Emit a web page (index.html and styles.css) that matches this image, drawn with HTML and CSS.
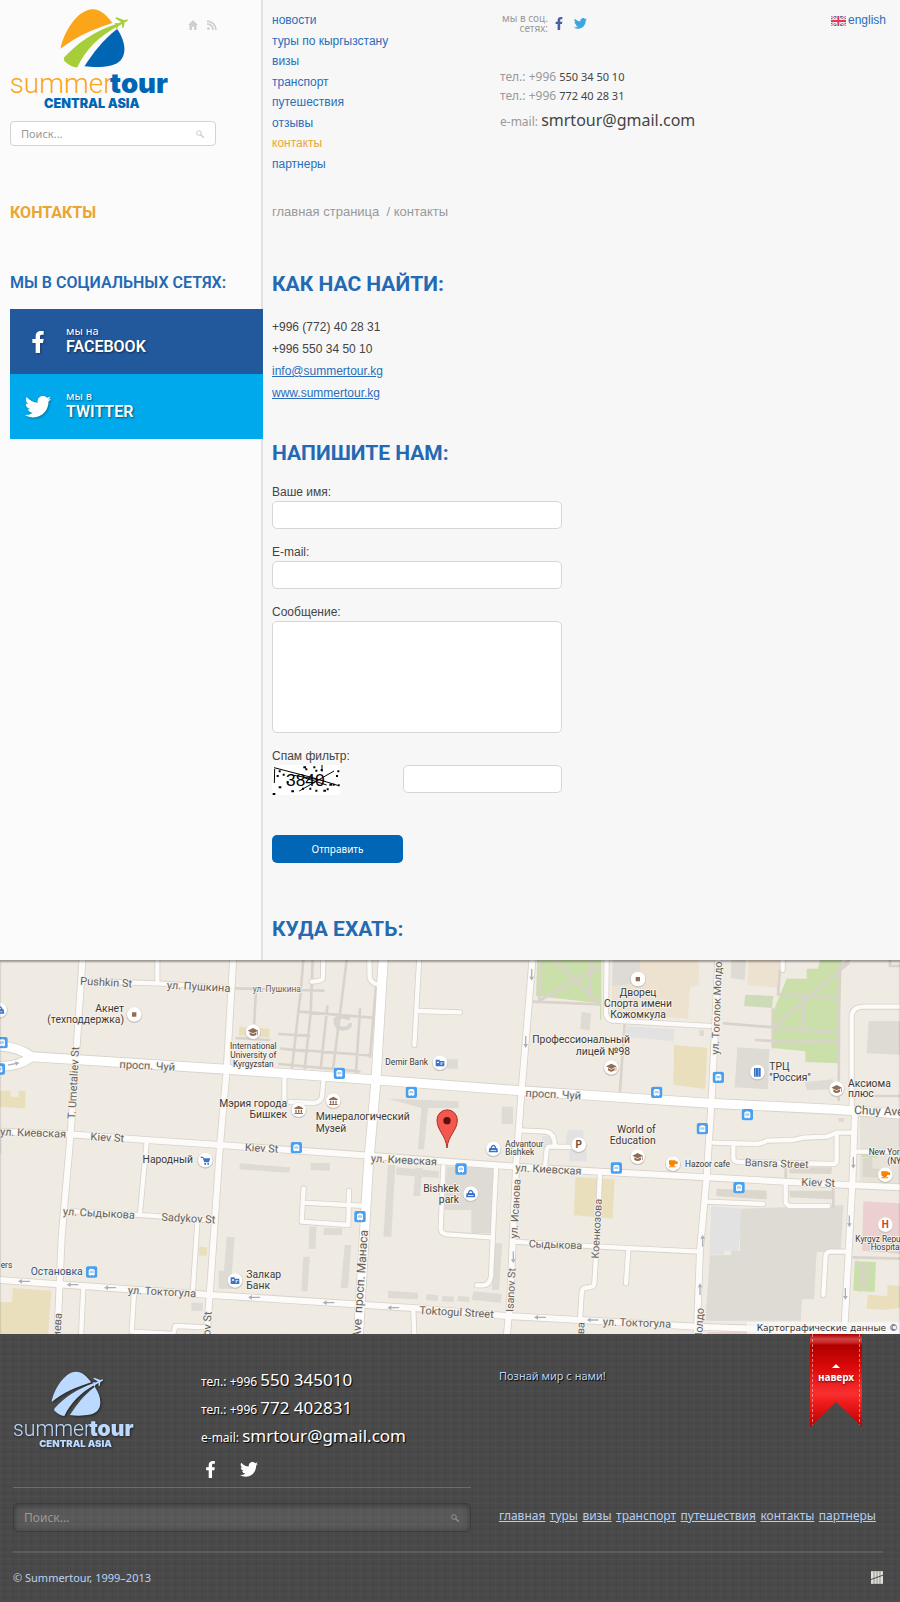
FILE: index.html
```html
<!DOCTYPE html>
<html lang="ru">
<head>
<meta charset="utf-8">
<title>Summertour — контакты</title>
<link rel="stylesheet" href="styles.css">
</head>
<body>
<svg class="defs" width="0" height="0" aria-hidden="true">
  <defs>
    <symbol id="ic-fb" viewBox="0 0 34 66"><path d="M10 66V36H0V24h10v-8C10 5 17 0 26 0h8v11h-6c-4 0-5 2-5 6v7h11l-2 12h-9v30z"/></symbol>
    <symbol id="ic-tw" viewBox="0 0 24 20"><path d="M24 2.4a9.700 9.700 0 0 1-2.800.8A4.900 4.900 0 0 0 23.300.4a9.800 9.800 0 0 1-3.100 1.200 4.900 4.900 0 0 0-8.400 4.500A14 14 0 0 1 1.700 1 4.900 4.900 0 0 0 3.200 7.500 4.900 4.900 0 0 1 1 6.900a4.900 4.900 0 0 0 3.900 4.900 4.900 4.900 0 0 1-2.200.1 4.900 4.900 0 0 0 4.600 3.400A9.900 9.900 0 0 1 0 17.300a13.900 13.900 0 0 0 7.500 2.200c9.100 0 14.300-7.700 14-14.600A10 10 0 0 0 24 2.400z"/></symbol>
    <symbol id="ic-search" viewBox="0 0 24 24"><circle cx="9" cy="9" r="7" fill="none" stroke="currentColor" stroke-width="3"/><path d="M14 14l8 8" stroke="currentColor" stroke-width="4" stroke-linecap="round"/></symbol>
    <symbol id="logo" viewBox="28 24 484 308">
      <path class="lg-a" d="M180 146C188 98 230 28 276 27c28 0 44 22 60 41-62 20-112 42-156 78z"/>
      <path class="lg-b" d="M190 173C234 124 286 92 345 72l-3-3 5-1 7 1 8-4-18-11 4-3 24 9 8-3c3 1 3 3 0 6l-8 4-2 15-5 1 0-12-12 7-4 9-3-6c-50 28-90 66-116 121-14-1-30-10-40-22z"/>
      <path class="lg-c" d="M252 198C278 158 306 120 350 86c14 20 22 42 22 62-1 28-16 42-40 48-28 6-58 5-80 2z"/>
      <text class="lg-sum" x="27" y="280">summer</text>
      <text class="lg-tour" x="329" y="279">tour</text>
      <text class="lg-ca" x="274" y="325" text-anchor="middle">CENTRAL ASIA</text>
    </symbol>
    <symbol id="bus" viewBox="0 0 36 36"><rect x="1" y="1" width="34" height="34" rx="6" fill="#4aa0ee"/><path d="M9 27V14c0-4 3-6 9-6s9 2 9 6v13h-3v2h-3v-2h-6v2h-3v-2z" fill="#fff"/><path d="M12 14h12v7H12z" fill="#a8d0f6"/></symbol>
    <symbol id="pin" viewBox="0 0 52 52"><circle cx="26" cy="27" r="24" fill="#c9c5be"/><circle cx="26" cy="25" r="22" fill="#fff"/></symbol>
    <symbol id="cap" viewBox="0 0 52 52"><use href="#pin"/><path d="M10 22l16-8 16 8-16 8zM16 27l10 5 10-5v7q-10 8-20 0zM39 24h2v12h-2z" fill="#936b52"/></symbol>
    <symbol id="cup" viewBox="0 0 52 52"><use href="#pin"/><path d="M14 15h19v3h7v8h-8l-3 6h-9l-6-5zM14 33h20v3H14z" fill="#fb8200"/></symbol>
    <symbol id="dot" viewBox="0 0 52 52"><use href="#pin"/><path d="M19 19h13v13H19z" fill="#936b52"/></symbol>
    <symbol id="bank" viewBox="0 0 52 52"><use href="#pin"/><path d="M13 16h12v4h14v16H13z" fill="#3b74c8"/><path d="M17 22h6v4h-6zM28 24h3v8h-3zM33 24h3v3h-3z" fill="#fff"/></symbol>
    <symbol id="museum" viewBox="0 0 52 52"><use href="#pin"/><path d="M13 20l13-7 13 7v3H13zM16 25h4v9h-4zM24 25h4v9h-4zM32 25h4v9h-4zM13 35h26v3H13z" fill="#936b52"/></symbol>
    <symbol id="bag" viewBox="0 0 52 52"><use href="#pin"/><path d="M14 23h24l2 13H12z" fill="#3b74c8"/><path d="M20 24v-4q6-9 12 0v4" fill="none" stroke="#3b74c8" stroke-width="4"/><path d="M18 29h16v3H18z" fill="#cfe0f5"/></symbol>
    <symbol id="arrow" viewBox="0 0 36 16"><path d="M0 8L12 1v5h24v4H12v5z" fill="#a9b0ba"/></symbol>
  </defs>
</svg>

<div class="top">
  <aside class="side">
    <div class="brand">
      <a href="#" class="logo" aria-label="Summertour"><svg class="logo-img"><use href="#logo"/></svg></a>
      <div class="quick">
        <a href="#" aria-label="Домой"><svg viewBox="0 0 28 28"><path d="M14 0l14 14h-4v14h-7v-9h-6v9H4V14H0z"/></svg></a>
        <a href="#" aria-label="RSS"><svg viewBox="0 0 28 28"><circle cx="4" cy="24" r="4"/><path d="M0 11a17 17 0 0 1 17 17M0 3a25 25 0 0 1 25 25" fill="none" stroke="#cfcfcf" stroke-width="5"/></svg></a>
      </div>
    </div>
    <form class="search">
      <input type="text" placeholder="Поиск..." aria-label="Поиск">
      <button type="button" aria-label="Искать"><svg><use href="#ic-search"/></svg></button>
    </form>
    <h1 class="page-title">КОНТАКТЫ</h1>
    <h3 class="soc-title">МЫ В СОЦИАЛЬНЫХ СЕТЯХ:</h3>
    <a href="#" class="soc soc-fb"><svg><use href="#ic-fb"/></svg><span><small>мы на</small><b>FACEBOOK</b></span></a>
    <a href="#" class="soc soc-tw"><svg><use href="#ic-tw"/></svg><span><small>мы в</small><b>TWITTER</b></span></a>
  </aside>

  <main class="main">
    <header class="head">
      <nav class="nav">
        <a href="#">новости</a>
        <a href="#">туры по кыргызстану</a>
        <a href="#">визы</a>
        <a href="#">транспорт</a>
        <a href="#">путешествия</a>
        <a href="#">отзывы</a>
        <a href="#" class="active">контакты</a>
        <a href="#">партнеры</a>
      </nav>
      <div class="info">
        <div class="nets"><span>мы в соц. сетях:</span><a href="#" class="nf" aria-label="Facebook"><svg><use href="#ic-fb"/></svg></a><a href="#" class="nt" aria-label="Twitter"><svg><use href="#ic-tw"/></svg></a></div>
        <p>тел.: +996 <b>550 34 50 10</b></p>
        <p>тел.: +996 <b>772 40 28 31</b></p>
        <p class="mail">e-mail: <strong>smrtour@gmail.com</strong></p>
      </div>
      <a href="#" class="lang"><svg viewBox="0 0 45 30"><path d="M0 0h45v30H0z" fill="#5a6fb0"/><path d="M0 0l45 30M45 0L0 30" stroke="#fff" stroke-width="7"/><path d="M0 0l45 30M45 0L0 30" stroke="#e0566a" stroke-width="3"/><path d="M22 0v30M0 15h45" stroke="#fff" stroke-width="11"/><path d="M22 0v30M0 15h45" stroke="#e23a4e" stroke-width="6"/></svg>english</a>
    </header>
    <div class="crumbs"><a href="#">главная страница</a>&nbsp; / контакты</div>

    <h2>КАК НАС НАЙТИ:</h2>
    <div class="find">
      <p>+996 (772) 40 28 31</p>
      <p>+996 550 34 50 10</p>
      <p><a href="#">info@summertour.kg</a></p>
      <p><a href="#">www.summertour.kg</a></p>
    </div>

    <h2>НАПИШИТЕ НАМ:</h2>
    <form class="form">
      <label for="f-name">Ваше имя:</label>
      <input id="f-name" type="text">
      <label for="f-mail">E-mail:</label>
      <input id="f-mail" type="text">
      <label for="f-msg">Сообщение:</label>
      <textarea id="f-msg"></textarea>
      <label for="f-spam">Спам фильтр:</label>
      <div class="spam">
        <svg class="captcha" viewBox="0 0 204 90" role="img" aria-label="3840">
          <path d="M0 0h204v90H0z" fill="#fff"/>
          <text x="42" y="62" class="cap-text">3840</text>
          <g fill="none" stroke="#000" stroke-width="3"><path d="M6 8l116 30 78 24M82 78l104-60M8 12l-1 42M60 30l90 16M96 38l68 22M150 0v20"/></g>
          <path d="M20 16h6v6h-6zM14 30h6v6h-6zM32 26h6v6h-6zM20 64h8v6h-8zM58 76h8v6h-8zM94 4h8v6h-8zM100 10h6v6h-6zM124 4h6v6h-6zM130 14h6v6h-6zM146 12h6v6h-6zM90 68h6v6h-6zM112 68h6v6h-6zM130 74h6v6h-6zM154 74h8v6h-8zM164 70h6v6h-6zM172 56h8v6h-8zM182 56h6v6h-6zM192 30h6v6h-6zM196 16h6v6h-6zM198 58h5v6h-5zM2 84h8v6H2zM44 48h6v6h-6z"/>
        </svg>
        <input id="f-spam" type="text">
      </div>
      <button type="button" class="send">Отправить</button>
    </form>
    <h2 class="last">КУДА ЕХАТЬ:</h2>
  </main>
</div>

<section class="map" aria-label="Карта">
<svg class="map-svg" viewBox="0 30 2700 1122" preserveAspectRatio="xMidYMid slice">
  <defs>
    <g id="r1">
      <path d="M472 20V95M240 93L472 100 690 115M440 575L420 790M190 782L450 797 640 812M592 820L578 1030M250 1010L243 1160M402 1030L395 1145 520 1152 526 1128 620 1132"/>
      <path d="M1258 20L1243 285M1258 183L1380 187M970 20L969 84Q968 94 935 95M1108 20L1109 84Q1116 105 1150 105M853 385V450M970 395L966 440Q960 458 940 459L870 456"/>
      <path d="M1330 650L1322 835Q1322 851 1340 853L1470 862M1488 655L1473 980Q1468 1006 1450 1006L1430 1006M911 715L905 815 1045 825 1047 722M910 758L1100 768"/>
      <path d="M1560 541L1640 545Q1666 552 1664 590M1635 650L1640 600Q1642 590 1650 590L1730 591M1540 875L1800 890 2100 905M1800 670L1790 890 1783 1000Q1782 1012 1765 1012L1753 1014Q1746 1016 1745 1030L1740 1110M1885 900L1878 1000M1240 1080L1243 1160"/>
      <path d="M1820 20L1818 190Q1820 210 1840 212L2130 228M2140 578L2270 582Q2290 580 2300 572L2380 570 2410 563 2480 560 2510 548H2560M2200 582V625Q2202 636 2220 636L2500 642Q2510 642 2510 630V555M2120 755L2290 762M2357 700V755Q2360 768 2375 768H2485M2470 1035L2477 915Q2480 905 2492 905H2540M2570 605H2700M2348 20V60M2555 470V195Q2560 170 2590 170H2700"/>
    </g>
    <g id="r2">
      <path d="M248 20L230 290 212 550 185 860 172 1160M700 20L680 360 660 585 635 950 620 1160M1598 20L1565 420 1548 650 1530 1060 1520 1160M2155 20L2135 450 2120 680 2100 900 2090 1160M2565 480L2557 700 2532 1160"/>
      <path d="M0 545L210 553 440 570 660 585 900 602 1110 617 1340 635 1550 650 1800 665 2120 682 2500 703 2700 712M0 990L175 1003 620 1034 900 1052 1250 1075 1520 1098 1740 1110 2090 1130 2260 1136 2700 1150"/>
    </g>
    <g id="r3">
      <path d="M95 320L680 358 1130 390 1560 422 1800 438 2130 460 2500 478 2700 492M1150 20L1128 390 1105 650 1075 1160"/>
      <path d="M-10 288Q50 288 95 320M-10 350Q60 350 95 320"/>
    </g>
  </defs>
  <path d="M0 0h2700v1160H0z" fill="#efebe3"/>
  <g fill="#dedad4">
    <path d="M720 640l150 12-2 16-150-10zM680 860l24 2-8 100v54h-40v-54h16zM574 1058h34v24h-34zM1164 446l212 8v20l-92 0-12 124h-18l10-124zM1505 470h34v52h-34zM1340 328h34v28h-34zM932 638l58 2v22l-58-2zM1190 652l126 12v20l-128-10zM1164 645h22l-12 215h-24zM1246 654h22l-8 84h-20zM1340 650h146l-14 200h-58v-70h-80zM1745 186l28 4-4 52-28-6zM1485 880h22l-10 140h-22zM1164 1022l90 6v20l-90-4zM1280 1032l34 4v18l-36-4zM1328 1038l34 2v16l-36-2zM1374 1038l34 2v16l-36-2zM1420 1024l86 8-4 26-86-8zM928 830h22l-4 66h-20zM910 920h20l-8 104h-18zM1034 885h20l-10 130h-22zM972 835h54v20h-56z"/>
    <path d="M1838 30h82v70l-84 10zM2194 30h44l-4 60-42-6zM2212 292l96 6-4 120-100-6zM2606 214h94v100l-100-4zM2414 396l86-8v30l-80 2zM2098 240h14v18h-14zM2515 504h18v12h-18zM2220 776l310-10-8 140h-72l-8 142h-36l-4 64h-286l14-196h64v-14h26z"/>
    <path d="M2580 500h120v208h-120z" fill="#e7e3da"/>
    <path d="M2150 716l150 6v26l-152-10zM2368 652h128l-2 20-126-2zM2368 722h128v26l-126-6zM2588 625l28-4 2 34 50 4v24l-80-2z" fill="#dcd7cc"/>
    <path d="M0 560h4v50H0z"/>
  </g>
  <g fill="#eadfbd">
    <path d="M0 422h32v18h24v-18h20v54l-76-6zM38 1014l116 8-10 138H0v-104h36zM598 890l24 2-2 26-24-2zM718 230l90 6v26l-92-6zM1726 682l118 6-6 118-116-10zM2022 285l100 8-6 124-96-12zM2604 1034l58 4v-34l38 4v66l-44 6-56-4z"/>
    <path d="M1920 30h176v76l-26 4-6 96-228-18v-80l84-10zM2246 30h98l-8 84-94-10z" fill="#ede2d0"/>
  </g>
  <g fill="#cbdfab">
    <path d="M1612 30h188v130l-192-22zM2460 30h66l-12 310-98-4v-32l-100-10 4-110 40-98h60V56h34z"/>
    <path d="M1800 30h4v180h-4zM2586 598h46v24l-48-2zM2564 934l64 2-4 90-64-4z"/>
    <path d="M2236 134l84 4-4 36-84-6z" fill="#cddbb9"/>
  </g>
  <path d="M2590 754l110 6v152l-114-10zM2122 1146h140v8h-140z" fill="#ecd0cf"/>
  <path d="M1708 540h42v48h10v46h-52v-46h-10v-34zM1880 228l144 10-4 36-142-14zM2134 768l90 8-8 126h-44v14l-44-4zM1626 558h34v40h-34z" fill="#e2e2e3"/>
  <g fill="none" stroke="#d9d3cc" stroke-width="8" stroke-linecap="round">
    <path d="M1600 155l200 8M1622 30l-4 120M1622 150L1800 50M1664 30l130 126M1775 30l-6 110"/>
    <path d="M708 115l192 5M768 120l-6 110M710 264l98 6M1040 30L1000 350M910 30l-10 120M938 30l-6 160 -18 165M900 185l215 18M900 300l210 16M982 170l-20 185M1080 178l-12 188M1128 110l-18 210M900 120l70 2M838 252l90 6M844 296l80 8M838 342l240 22M900 140l-24 215M900 256h22"/>
    <path d="M2548 30l-30 20-2 400M2545 40L2322 230M2336 132l180 12M2318 178v114M2412 148l-4 86M2172 220l345 28M2268 270l100 6 150-4M2340 60l-6 74M1874 222l-14 200M2670 30v18h30M2620 438h80M2357 655v40M2500 700v70M2560 922l140 4M2570 935l18 16-8 70M2586 948h20l-12 66"/>
  </g>
  <path d="M1050 206q-34-14-44 4q0 24 24 26q22-2 20-16" fill="none" stroke="#d8d5d0" stroke-width="12"/>
  <use href="#r1" class="road case1"/><use href="#r2" class="road case2"/><use href="#r3" class="road case3"/>
  <use href="#r1" class="road fill1"/><use href="#r2" class="road fill2"/><use href="#r3" class="road fill3"/>

  <g>
    <use href="#arrow" x="54" y="986" width="36" height="16"/><use href="#arrow" x="200" y="996" width="36" height="16"/><use href="#arrow" x="312" y="1005" width="36" height="16"/><use href="#arrow" x="744" y="1034" width="36" height="16"/><use href="#arrow" x="968" y="1050" width="36" height="16"/><use href="#arrow" x="1162" y="1065" width="36" height="16"/><use href="#arrow" x="1602" y="1094" width="36" height="16"/><use href="#arrow" x="1760" y="1102" width="36" height="16"/>
    <g transform="rotate(-90)"><use href="#arrow" x="-92" y="1587" width="36" height="16"/><use href="#arrow" x="-294" y="1569" width="36" height="16"/><use href="#arrow" x="-940" y="1532" width="36" height="16"/><use href="#arrow" x="-656" y="2552" width="36" height="16"/><use href="#arrow" x="-832" y="2540" width="36" height="16"/><use href="#arrow" x="-1050" y="2528" width="36" height="16"/></g>
    <g transform="rotate(90)"><use href="#arrow" x="854" y="-2116" width="36" height="16"/><use href="#arrow" x="1000" y="-2108" width="36" height="16"/></g>
    <use href="#arrow" transform="translate(60 346) rotate(168)" width="36" height="16"/>
  </g>

  <g class="lbl street">
    <text transform="translate(240 104) rotate(3)">Pushkin St</text>
    <text transform="translate(500 116) rotate(3)">ул. Пушкина</text>
    <text class="xs" x="758" y="126">ул. Пушкина</text>
    <text transform="translate(358 354) rotate(3)">просп. Чуй</text>
    <text transform="translate(226 508) rotate(-87)">T. Umetaliev St</text>
    <text transform="translate(0 556) rotate(2)">ул. Киевская</text>
    <text transform="translate(271 571) rotate(3)">Kiev St</text>
    <text transform="translate(734 603) rotate(3)">Kiev St</text>
    <text transform="translate(188 795) rotate(3)">ул. Сыдыкова</text>
    <text transform="translate(484 812) rotate(3)">Sadykov St</text>
    <text transform="translate(383 1031) rotate(3)">ул. Токтогула</text>
    <text transform="translate(178 1200) rotate(-86)">алиева</text>
    <text transform="translate(630 1176) rotate(-87)">nov St</text>
    <text transform="translate(1112 636) rotate(3)">ул. Киевская</text>
    <text class="l" transform="translate(1081 1166) rotate(-86)">Ave&#160; просп. Манаса</text>
    <text transform="translate(1258 1092) rotate(3)">Toktogul Street</text>
    <text transform="translate(1576 440) rotate(3)">просп. Чуй</text>
    <text transform="translate(1546 664) rotate(3)">ул. Киевская</text>
    <text class="s" transform="translate(1552 866) rotate(-87)">ул. Исанова</text>
    <text class="s" transform="translate(1540 1086) rotate(-87)">Isanov St</text>
    <text class="s" transform="translate(1586 892) rotate(2)">Сыдыкова</text>
    <text class="s" transform="translate(1796 926) rotate(-87)">Коенкозова</text>
    <text class="s" transform="translate(1750 1186) rotate(-87)">това</text>
    <text class="s" transform="translate(2156 314) rotate(-88)">ул. Тоголок Молдо</text>
    <text class="s" transform="translate(2106 1176) rotate(-87)">Молдо</text>
    <text transform="translate(1808 1126) rotate(2)">ул. Токтогула</text>
    <text class="l" transform="translate(2562 492) rotate(2)">Chuy Ave</text>
    <text class="s" transform="translate(2234 648) rotate(2)">Bansra Street</text>
    <text transform="translate(2404 707) rotate(2)">Kiev St</text>
  </g>
  <g class="lbl poi">
    <text x="372" y="186" text-anchor="end">Акнет</text><text x="372" y="220" text-anchor="end">(техподдержка)</text>
    <g class="xs" text-anchor="middle"><text x="760" y="296">International</text><text x="760" y="324">University of</text><text x="760" y="351">Kyrgyzstan</text></g>
    <text x="861" y="471" text-anchor="end">Мэрия города</text><text x="861" y="504" text-anchor="end">Бишкек</text>
    <text x="579" y="640" text-anchor="end">Народный</text>
    <text x="248" y="976" text-anchor="end" fill="#31577f">Остановка</text>
    <text class="xs" x="2" y="953">ers</text>
    <text x="739" y="984">Залкар</text><text x="739" y="1018">Банк</text>
    <text class="xs" x="1156" y="346">Demir Bank</text>
    <text x="947" y="510">Минералогический</text><text x="947" y="546">Музей</text>
    <text class="xs" x="1516" y="590">Advantour</text><text class="xs" x="1516" y="616">Bishkek</text>
    <text x="1377" y="726" text-anchor="end">Bishkek</text><text x="1377" y="760" text-anchor="end">park</text>
    <text x="1890" y="280" text-anchor="end">Профессиональный</text><text x="1890" y="315" text-anchor="end">лицей №98</text>
    <g text-anchor="middle"><text x="1914" y="137">Дворец</text><text x="1914" y="170">Спорта имени</text><text x="1914" y="204">Кожомкула</text></g>
    <text x="2308" y="359">ТРЦ</text><text x="2308" y="392">"Россия"</text>
    <text x="2544" y="410">Аксиома</text><text x="2544" y="442">плюс</text>
    <text x="1967" y="549" text-anchor="end">World of</text><text x="1967" y="583" text-anchor="end">Education</text>
    <text class="xs" x="2055" y="650">Hazoor cafe</text>
    <text class="xs" x="2606" y="614">New York</text><text class="xs" x="2662" y="642">(NY</text>
    <text class="xs" x="2566" y="875">Kyrgyz Repub</text><text class="xs" x="2612" y="900">Hospital</text>
  </g>
  <g>
    <use href="#bus" x="-12" y="260" width="36" height="36"/><use href="#bus" x="-20" y="339" width="36" height="36"/><use href="#bus" x="257" y="948" width="36" height="36"/><use href="#bus" x="871" y="575" width="36" height="36"/><use href="#bus" x="1000" y="352" width="36" height="36"/><use href="#bus" x="1216" y="409" width="36" height="36"/><use href="#bus" x="1365" y="639" width="36" height="36"/><use href="#bus" x="1062" y="782" width="36" height="36"/><use href="#bus" x="1952" y="409" width="36" height="36"/><use href="#bus" x="2137" y="364" width="36" height="36"/><use href="#bus" x="2224" y="476" width="36" height="36"/><use href="#bus" x="2089" y="518" width="36" height="36"/><use href="#bus" x="1831" y="636" width="36" height="36"/><use href="#bus" x="2199" y="695" width="36" height="36"/>
    <use href="#bag" x="-27" y="155" width="52" height="52"/><use href="#dot" x="377" y="168" width="52" height="52"/><use href="#cap" x="733" y="220" width="52" height="52"/><use href="#museum" x="870" y="454" width="52" height="52"/><use href="#museum" x="974" y="427" width="52" height="52"/>
    <use href="#pin" x="590" y="605" width="52" height="52"/><path d="M602 620h7l3 5h19l-4 12h-14l-5-13h-6zM613 639h5v5h-5zM622 639h5v5h-5z" fill="#3b74c8"/>
    <use href="#bank" x="679" y="966" width="52" height="52"/><use href="#bank" x="1294" y="313" width="52" height="52"/><use href="#bag" x="1454" y="571" width="52" height="52"/><use href="#bag" x="1386" y="706" width="52" height="52"/>
    <use href="#pin" x="1710" y="559" width="52" height="52"/><text x="1736" y="595" class="glyph" fill="#7b5138">P</text>
    <use href="#dot" x="1888" y="62" width="52" height="52"/><use href="#cap" x="1808" y="327" width="52" height="52"/><use href="#cap" x="1887" y="595" width="52" height="52"/><use href="#cap" x="2484" y="391" width="52" height="52"/><use href="#cup" x="1993" y="616" width="52" height="52"/><use href="#cup" x="2630" y="649" width="52" height="52"/>
    <use href="#pin" x="2246" y="341" width="52" height="52"/><path d="M2262 354h5v26h-5zM2277 354h5v26h-5zM2268 354h8v26h-8z" fill="#3b74c8"/>
    <use href="#pin" x="2630" y="799" width="52" height="52"/><text x="2656" y="835" class="glyph" fill="#d93a32">H</text>
    <path d="M1341 594c-4-40-30-52-30-84a30 30 0 0 1 61 0c0 32-27 44-31 84z" fill="#f4574d" stroke="#a93229" stroke-width="3"/><circle cx="1341" cy="512" r="11" fill="#5b100c"/>
  </g>
</svg>
<span class="credit">Картографические данные ©</span>
</section>

<footer class="foot">
  <div class="foot-grid">
    <div class="foot-left">
      <div class="foot-brand">
        <a href="#" class="foot-logo" aria-label="Summertour"><svg><use href="#logo"/></svg></a>
        <div class="foot-contacts">
          <p>тел.: +996 <b>550 345010</b></p>
          <p>тел.: +996 <b>772 402831</b></p>
          <p>e-mail: <b>smrtour@gmail.com</b></p>
          <div class="foot-nets"><a href="#" class="nf" aria-label="Facebook"><svg><use href="#ic-fb"/></svg></a><a href="#" class="nt" aria-label="Twitter"><svg><use href="#ic-tw"/></svg></a></div>
        </div>
      </div>
      <form class="search dark">
        <input type="text" placeholder="Поиск..." aria-label="Поиск">
        <button type="button" aria-label="Искать"><svg><use href="#ic-search"/></svg></button>
      </form>
    </div>
    <div class="foot-right">
      <div class="foot-top">
        <p class="slogan">Познай мир с нами!</p>
        <a href="#" class="ribbon"><span>наверх</span></a>
      </div>
      <nav class="foot-nav">
        <a href="#">главная</a><a href="#">туры</a><a href="#">визы</a><a href="#">транспорт</a><a href="#">путешествия</a><a href="#">контакты</a><a href="#">партнеры</a>
      </nav>
    </div>
  </div>
  <div class="foot-bottom">
    <span>© Summertour, 1999–2013</span>
    <a href="#" aria-label="Разработчик"><svg class="dev" viewBox="0 0 36 38"><path d="M0 0h36v38H0z" fill="#dfe0da"/><path d="M9 0v38M18 0v38M27 0v38" stroke="#8e8f8a" stroke-width="3"/><path d="M0 25l36-13" stroke="#4a4a4a" stroke-width="3"/></svg></a>
  </div>
</footer>
</body>
</html>
```
FILE: styles.css
```css
* { box-sizing: border-box; }
body { margin: 0; background: #484848; color: #444; font: 12px/15px "Liberation Sans", Arial, sans-serif; }
h1, h2, h3, p { margin: 0; }
a { color: #2a6ebb; text-decoration: none; }
svg { display: block; fill: currentColor; }
.defs { position: absolute; }

.top { display: grid; grid-template-columns: 263px 1fr; }
.side { background: #fbfbfb; padding: 8px 0 0 10px; border-right: 2px solid #e2e2e2; }
.main { background: #f7f7f7; padding: 12px 14px 0 9px; }

.brand { display: flex; justify-content: space-between; padding-right: 44px; }
.logo-img { width: 161px; height: 103px; }
.lg-a { fill: var(--logo, #faa51a); }
.lg-b { fill: var(--logo, #a6ce39); }
.lg-c, .lg-tour, .lg-ca { fill: var(--logo, #0066b3); }
.lg-sum { fill: var(--logo, #faa51a); font: 300 84px Roboto, sans-serif; }
.lg-tour { font: 900 83px Inter, sans-serif; }
.lg-ca { font: 900 38px Inter, sans-serif; }
.quick { display: flex; gap: 9px; padding-top: 12px; }
.quick a { color: #cfcfcf; }
.quick svg { width: 10px; height: 10px; }

.search { display: flex; align-items: center; margin: 10px 45px 0 0; height: 25px; padding: 0 11px 0 10px; border: 1px solid #d3d3d3; border-radius: 4px; background: #fff; }
.search input { flex: 1; min-width: 0; border: 0; padding: 0; outline: 0; background: none; color: #999; font: 11px "Noto Sans", sans-serif; }
.search input::placeholder { color: #999; opacity: 1; }
.search button { border: 0; padding: 0; background: none; color: #ccc; }
.search svg { width: 8px; height: 8px; }

.page-title { margin-top: 54px; color: #eba532; font: 700 16px/25px Roboto, sans-serif; }
.soc-title { margin: 46px 0 14px; color: #2469b4; font: 600 16px/24px Roboto, sans-serif; }
.soc { display: flex; align-items: center; height: 65px; margin-right: -2px; color: #fff; text-shadow: 1px 1px 2px rgba(0,0,0,.5); }
.soc svg { width: 56px; height: 22px; filter: drop-shadow(1px 1px 1px rgba(0,0,0,.3)); }
.soc span { padding-bottom: 4px; }
.soc small { display: block; font: 11px/14px "Noto Sans", sans-serif; }
.soc b { display: block; font: 600 16px/18px Roboto, sans-serif; }
.soc-fb { background: #22589c; }
.soc-tw { background: #00a9ec; }

.head { display: grid; grid-template-columns: 228px 1fr auto; }
.nav { display: flex; flex-direction: column; justify-content: space-between; height: 161px; line-height: 17px; }
.nav .active { color: #eba532; }
.info { font: 12px/19px "Noto Sans", sans-serif; color: #999; padding-top: 1px; }
.info b { font-weight: 400; font-size: 11px; color: #444; }
.info .mail { margin-top: 5px; line-height: 20px; }
.info strong { font-weight: 400; font-size: 16px; color: #444; }
.nets { display: flex; align-items: center; margin-bottom: 34px; font: 10px/10px "Noto Sans", sans-serif; }
.nets span { width: 48px; text-align: right; margin-right: 7px; }
.nf { color: #4760a3; }
.nt { color: #38a8e0; margin-left: 11px; }
.nets .nf svg { width: 8px; height: 13px; }
.nets .nt svg { width: 13px; height: 11px; }
.lang { display: flex; gap: 2px; align-self: start; align-items: center; line-height: 17px; }
.lang svg { width: 15px; height: 10px; }
.crumbs { margin-top: 31px; font-size: 13px; line-height: 16px; color: #999; }
.crumbs a { color: #999; }

h2 { margin-top: 50px; color: #2469b4; font: 700 21px/28px Roboto, sans-serif; }
.find { padding: 18px 0 0; line-height: 22px; }
.find + h2 { margin-top: 35px; }
.find a { text-decoration: underline; }
.form { width: 290px; padding-top: 18px; }
.form label { display: block; height: 16px; line-height: 14px; }
.form input, .form textarea { display: block; width: 100%; height: 28px; margin-bottom: 16px; border: 1px solid #d6d6d6; border-radius: 5px; background: #fff; }
.form textarea { height: 112px; resize: none; }
.spam { display: flex; justify-content: space-between; }
.form .spam input { width: 159px; margin: 0; }
.captcha { width: 68px; height: 30px; fill: #000; }
.cap-text { font: 52px "Liberation Sans", sans-serif; }
.send { display: block; width: 131px; height: 28px; margin-top: 40px; border: 0; border-radius: 5px; background: #0066b5; color: #fff; font: 10px "Noto Sans", sans-serif; }
h2.last { margin-top: 52px; padding-bottom: 17px; }

.map { position: relative; height: 374px; background: #efebe3; overflow: hidden; }
.map-svg { width: 100%; height: 100%; }
.map::after { content: ""; position: absolute; inset: 0; box-shadow: inset 0 2px 2px rgba(0,0,0,.35); }
.credit { position: absolute; right: 0; bottom: 0; padding: 0 2px 0 10px; background: rgba(250,249,247,.7); font: 9px/12px "DejaVu Sans", sans-serif; color: #333; }
.road { fill: none; stroke-linecap: round; stroke-linejoin: round; }
.case1, .case2, .case3 { stroke: #d8d3c9; }
.fill1, .fill2 { stroke: #fcfbf9; }
.fill3 { stroke: #fff; }
.case1 { stroke-width: 18px; }
.fill1 { stroke-width: 13px; }
.case2 { stroke-width: 23px; }
.fill2 { stroke-width: 18px; }
.case3 { stroke-width: 32px; }
.fill3 { stroke-width: 27px; }
.lbl { font: 32px Roboto, sans-serif; paint-order: stroke; stroke: #f5f2ed; stroke-width: 6px; stroke-linejoin: round; }
.street { fill: #66615a; font-size: 33px; }
.street .s { font-size: 32px; }
.street .l { font-size: 36px; }
.poi { fill: #3c3a38; font-size: 31px; }
.lbl .xs { font-size: 25px; }
.glyph { font: 700 30px Roboto, sans-serif; text-anchor: middle; }

.foot { padding: 0 17px 0 13px; color: #b9d3f5; font: 12px/16px "Noto Sans", sans-serif; background: repeating-linear-gradient(0deg, rgba(255,255,255,.02) 0 1px, transparent 1px 3px, rgba(0,0,0,.04) 3px 4px, transparent 4px 7px), repeating-linear-gradient(90deg, rgba(255,255,255,.02) 0 1px, transparent 1px 4px, rgba(0,0,0,.04) 4px 5px, transparent 5px 9px), #494949; }
.foot-grid { display: grid; grid-template-columns: 458fr 384fr; gap: 28px; padding-bottom: 19px; border-bottom: 2px solid #5c5c5c; }
.foot-brand { display: grid; grid-template-columns: 188px 1fr; height: 154px; padding-top: 33px; border-bottom: 1px solid #6d6d6d; }
.foot-logo { --logo: #bcdaff; padding-top: 4px; }
.foot-logo svg { width: 123px; height: 78px; filter: drop-shadow(1px 1px 1px rgba(0,0,0,.5)); }
.foot-contacts { color: #fff; text-shadow: 1px 1px 1px #000; }
.foot-contacts p { line-height: 26px; }
.foot-contacts b { font-weight: 400; font-size: 17px; }
.foot-nets { display: flex; align-items: center; gap: 25px; padding: 10px 0 0 5px; }
.foot-nets a { color: #fff; margin: 0; }
.foot-nets .nf svg { width: 9px; height: 17px; }
.foot-nets .nt svg { width: 18px; height: 15px; }
.search.dark { height: 29px; margin: 15px 0 0; background: rgba(255,255,255,.09); border-color: #3c3c3c; box-shadow: inset 0 1px 6px rgba(0,0,0,.4); }
.search.dark input { color: #999; font-size: 12px; }
.search.dark button { color: #909090; }
.foot-right { display: flex; flex-direction: column; justify-content: space-between; padding-bottom: 8px; }
.foot-top { display: flex; justify-content: space-between; padding-right: 21px; }
.slogan { padding-top: 34px; font-size: 11px; text-shadow: 1px 1px 1px #000; }
.ribbon { width: 52px; height: 93px; color: #fff; font: 700 10px/14px "Noto Sans", sans-serif; text-align: center; text-shadow: 0 1px 2px rgba(0,0,0,.6); background: linear-gradient(#a00 0, #c44 5px, #c22 9px, #b00000 11px, #d80808 32px, #f92f2f 60px, #f01c1c 68px, #b00 93px); clip-path: polygon(0 0, 100% 0, 100% 100%, 50% 73%, 0 100%); }
.ribbon span { display: block; margin: 0 2px; padding-top: 30px; height: 93px; border: dashed rgba(255,200,200,.6); border-width: 0 1px; }
.ribbon span::before { content: ""; display: block; width: 0; margin: 0 auto 2px; border: 4px solid transparent; border-top: 0; border-bottom-color: #fff; }
.foot-nav { display: flex; justify-content: space-between; padding-right: 7px; }
.foot-nav a { color: #b4cdf0; text-decoration: underline; }
.foot-bottom { display: flex; justify-content: space-between; align-items: center; height: 49px; font-size: 11px; }
.dev { width: 12px; height: 13px; }
```
